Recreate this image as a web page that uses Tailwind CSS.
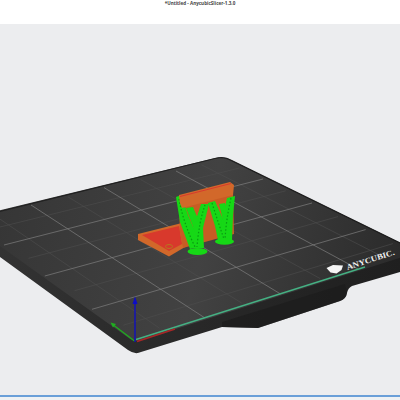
<!doctype html>
<html>
<head>
<meta charset="utf-8">
<script src="https://cdn.jsdelivr.net/npm/@tailwindcss/browser@4"></script>
</head>
<body class="w-[400px] h-[400px] overflow-hidden bg-white">
<div class="flex flex-col w-[400px] h-[400px] font-['Open_Sans','Liberation_Sans',sans-serif]">
  <header class="h-[24px] bg-white flex justify-center">
    <span class="text-[4.6px] leading-[7px] font-bold text-[#444]">*Untitled - AnycubicSlicer-1.3.0</span>
  </header>
  <main class="h-[371px] bg-[#ecedef]">
    <svg class="block w-[400px] h-[371px]" viewBox="0 24 400 371" xmlns="http://www.w3.org/2000/svg">
      <defs>
        <linearGradient id="bed" gradientUnits="userSpaceOnUse" x1="0" y1="210" x2="400" y2="300">
          <stop offset="0" stop-color="#363636"/>
          <stop offset=".5" stop-color="#424242"/>
          <stop offset="1" stop-color="#2a2a2a"/>
        </linearGradient>
        <linearGradient id="side" gradientUnits="userSpaceOnUse" x1="0" y1="250" x2="400" y2="280">
          <stop offset="0" stop-color="#333333"/>
          <stop offset=".4" stop-color="#2a2a2a"/>
          <stop offset="1" stop-color="#1f1f1f"/>
        </linearGradient>
      </defs>

      <!-- bed body and top surface -->
      <path fill="url(#side)" d="M215 158 Q224 155 232 160 L420 252 L400 272 L352 286 Q348 288 347 293 Q346 299 340 301 L258 328 L222 327 L141 352 Q135 355 128 350 L0 257 L-40 225 L-40 220 Z"/>
      <path fill="url(#bed)" d="M215 158.500 Q224 156 232 161 L418 252 L141 340 Q135 342 130 339 L-35 221 Z"/>
      <path class="fill-none stroke-[#1c1c1c]" stroke-width=".8" d="M-35 220 L215 158.500 Q224 156 232 161 L418 252"/>
      <path fill="#1b1b1b" d="M222 327 L258 328 L340 301 Q346 299 347 293 L345 284 L222 322 Z" opacity=".6"/>

      <!-- minor grid -->
      <g class="stroke-[#4d4d4d]" stroke-width=".6">
        <line x1="159.600" y1="328.200" x2="-6.300" y2="214.800"/>
        <line x1="241.500" y1="302.900" x2="68.100" y2="196.900"/>
        <line x1="320.200" y1="278.600" x2="140.500" y2="179.500"/>
        <line x1="385.900" y1="258.300" x2="201.500" y2="164.800"/>
        <line x1="123.400" y1="325.200" x2="392.900" y2="243.600"/>
        <line x1="74.500" y1="290.700" x2="338" y2="216.600"/>
        <line x1="28.500" y1="258.300" x2="285.700" y2="190.800"/>
        <line x1="-11.800" y1="229.900" x2="239.500" y2="168"/>
      </g>
      <!-- major grid -->
      <g class="stroke-[#7e7e7e]" stroke-width=".7">
        <line x1="205" y1="318" x2="31" y2="205"/>
        <line x1="280.600" y1="294" x2="104" y2="187.600"/>
        <line x1="358" y1="269" x2="176" y2="171"/>
        <line x1="4" y1="245" x2="263" y2="179"/>
        <line x1="44.800" y1="276" x2="312" y2="203"/>
        <line x1="92" y1="309.300" x2="365.600" y2="229.600"/>
      </g>

      <!-- bed edge, logo, name -->
      <line class="stroke-[#45b083]" stroke-width="1.500" x1="136" y1="339.500" x2="365" y2="267"/>
      <path class="fill-[#f5f5f5]" d="M326.500 268 L333 265 L343 265.500 L341.500 270 L336.500 273.500 L330.500 272.500 Z"/>
      <text class="fill-[#f0f0f0] font-['Liberation_Serif',serif] font-bold" font-size="8" textLength="50" lengthAdjust="spacingAndGlyphs" transform="translate(347.500 270) rotate(-18)">ANYCUBIC.</text>

      <!-- model -->
      <g class="blur-[0.4px]">
        <path class="fill-[#d2682a]" d="M138 234 L180 223.500 L185 247 L169 256.500 L138 240 Z"/>
        <path class="fill-[#d8392c]" d="M142 235 L179 226 L182 244 L169 251 Z"/>
        <ellipse class="fill-none stroke-[#b8761f]" stroke-width="1" cx="169" cy="246.500" rx="3.500" ry="2"/>
        <path class="fill-[#c85c24]" d="M179 205 L233 193 L234 234 L183 248 L180 232 Z"/>

        <!-- supports -->
        <g class="fill-[#16d816]">
          <path d="M176 197 L181 195 L188 215 L201 246 L190 249 L180 222 Z"/>
          <path d="M201 204 L209 204 L203 228 L204 248 L191 248 L192 232 Z"/>
          <path d="M186 208 L193 207 L201 226 L195 232 Z"/>
          <path d="M208 203 L215 201 L227 228 L231 240 L218 240 L215 226 Z"/>
          <path d="M227 198 L235 196 L233 215 L232 240 L219 240 L222 220 Z"/>
          <path d="M219 204 L225 203 L228 220 L224 224 Z"/>
        </g>
        <g class="fill-none stroke-[#0a9a12]" stroke-width="1.200" stroke-dasharray="1.500 2">
          <path d="M179 199 Q183 222 195 247"/>
          <path d="M205 205 Q199 222 197 247"/>
          <path d="M212 203 Q218 222 224 239"/>
          <path d="M231 198 Q226 220 225 240"/>
        </g>
        <ellipse class="fill-[#16d816]" cx="197.500" cy="251.500" rx="10" ry="3.500"/>
        <ellipse class="fill-[#16d816]" cx="224.500" cy="241.500" rx="9.500" ry="3.300"/>

        <!-- top bar sits in front of the supports -->
        <path class="fill-[#d2682a]" d="M179 195 L230 182 L234 185 L233 195 L182 208 L180 203 Z"/>
        <line class="stroke-[#d8392c]" stroke-width="1" x1="180" y1="196.500" x2="231" y2="183.500"/>
      </g>

      <!-- axes -->
      <line class="stroke-[#1fae1f]" stroke-width="1.300" x1="134.500" y1="341" x2="112" y2="324"/>
      <path class="fill-[#1fae1f]" d="M110.500 322.500 L116 324 L113 327.500 Z"/>
      <line class="stroke-[#a82626]" stroke-width="1.800" x1="137" y1="341.500" x2="175" y2="329"/>
      <line class="stroke-[#0c0cc8]" stroke-width="1.300" x1="135" y1="342" x2="135" y2="300"/>
      <path class="fill-[#0c0cc8]" d="M135 296.500 L137.500 304 L132.500 304 Z"/>
    </svg>
  </main>
  <div class="h-[1.500px] bg-[#6a9fd8]"></div>
  <div class="flex-1 bg-[#eef1f3]"></div>
</div>
</body>
</html>
